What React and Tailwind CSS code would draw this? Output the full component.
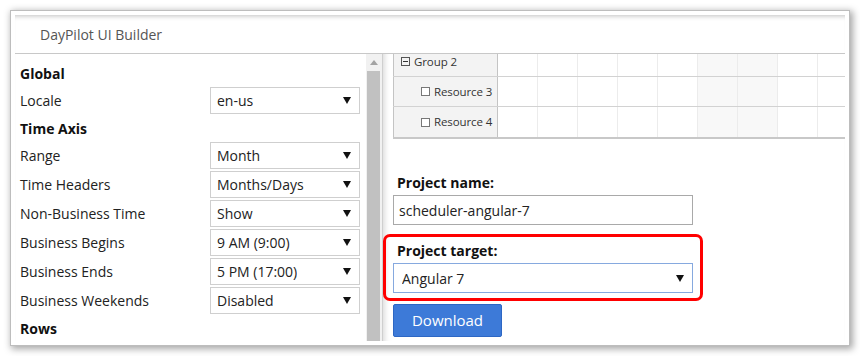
import React from "react";

const font = { fontFamily: '"Open Sans", "Liberation Sans", sans-serif' };

function Arrow() {
  return (
    <svg width="8" height="7" viewBox="0 0 8 7" className="shrink-0">
      <path d="M0 0 H8 L4 7 Z" fill="#111" />
    </svg>
  );
}

function Select({ value, className = "" }) {
  return (
    <div className={`flex items-center justify-between bg-white ${className}`}>
      <span className="truncate">{value}</span>
      <Arrow />
    </div>
  );
}

function Heading({ children }) {
  return <div className="h-[26px] flex items-center font-bold text-[14px] text-[#111]">{children}</div>;
}

function Row({ label, value }) {
  return (
    <div className="h-[29px] flex items-center">
      <div className="w-[190px] text-[14px] text-[#222]">{label}</div>
      <Select
        value={value}
        className="w-[150px] h-[27px] border border-[#cfcfcf] pl-[6px] pr-[8px] text-[14px] text-[#222]"
      />
    </div>
  );
}

const cols = [0, 1, 2, 3, 4, 5, 6, 7, 8];
const weekend = [5, 6];

function GridRow({ children, last }) {
  return (
    <div className={`flex h-[30px] ${last ? "" : "border-b border-[#d2d2d2]"}`}>
      <div className="w-[105px] shrink-0 bg-[#f3f3f3] border-l border-r border-[#c4c4c4] flex items-center text-[11.5px] text-[#333] tracking-[-0.1px]">
        {children}
      </div>
      <div className="flex">
        {cols.map((c) => (
          <div
            key={c}
            className={`w-[40px] shrink-0 border-r border-[#ececec] ${
              weekend.includes(c) ? "bg-[#f8f8f8]" : "bg-white"
            }`}
          />
        ))}
      </div>
    </div>
  );
}

function MinusBox() {
  return (
    <span className="w-[9px] h-[9px] border border-[#555] flex items-center justify-center mr-[4px]">
      <span className="w-[5px] h-px bg-[#333]" />
    </span>
  );
}

function EmptyBox() {
  return <span className="w-[9px] h-[9px] border border-[#777] bg-white mr-[4px]" />;
}

export default function App() {
  return (
    <div className="w-[860px] h-[356px] bg-white p-[10px]" style={font}>
      <div className="w-[840px] h-[336px] bg-white border border-[#bdbdbd] shadow-[2px_2px_7px_1px_rgba(0,0,0,0.35)] p-[4px]">
        <div className="h-full flex flex-col shadow-[inset_0_5px_5px_-4px_rgba(0,0,0,0.25)]">
          {/* header */}
          <div className="h-[39px] shrink-0 border-b border-[#c8c8c8] flex items-center pl-[25px] text-[14px] text-[#555]">
            DayPilot UI Builder
          </div>

          <div className="flex flex-1 min-h-0">
            {/* left settings */}
            <div className="w-[351px] shrink-0 overflow-hidden pl-[5px] pt-[6px]">
              <Heading>Global</Heading>
              <Row label="Locale" value="en-us" />
              <Heading>Time Axis</Heading>
              <Row label="Range" value="Month" />
              <Row label="Time Headers" value="Months/Days" />
              <Row label="Non-Business Time" value="Show" />
              <Row label="Business Begins" value="9 AM (9:00)" />
              <Row label="Business Ends" value="5 PM (17:00)" />
              <Row label="Business Weekends" value="Disabled" />
              <Heading>Rows</Heading>
            </div>

            {/* scrollbar */}
            <div className="w-[16px] shrink-0 bg-[#f1f1f1] flex flex-col items-start pl-px">
              <div className="w-[13px] h-[17px] flex items-center justify-center">
                <svg width="8" height="5" viewBox="0 0 8 5">
                  <path d="M0 5 L4 0 L8 5 Z" fill="#a3a3a3" />
                </svg>
              </div>
              <div className="w-[13px] flex-1 bg-[#c1c1c1]" />
            </div>

            {/* right panel */}
            <div className="flex-1 min-w-0 overflow-hidden border-l border-[#cfcfcf] shadow-[inset_7px_0_6px_-6px_rgba(0,0,0,0.18)] pl-[10px]">
              <div className="-mt-[7px] border-b-2 border-[#c8c8c8]">
                <GridRow>
                  <span className="pl-[7px] flex items-center">
                    <MinusBox />
                    Group 2
                  </span>
                </GridRow>
                <GridRow>
                  <span className="pl-[27px] flex items-center">
                    <EmptyBox />
                    Resource 3
                  </span>
                </GridRow>
                <GridRow last>
                  <span className="pl-[27px] flex items-center">
                    <EmptyBox />
                    Resource 4
                  </span>
                </GridRow>
              </div>

              <div className="mt-[33px] h-[20px] flex items-center pl-[4px] font-bold text-[14px] text-[#111]">
                Project name:
              </div>
              <div className="mt-[3px] w-[300px] h-[30px] border border-[#a9a9a9] flex items-center pl-[5px] text-[14px] text-[#222]">
                scheduler-angular-7
              </div>

              <div className="mt-[9px] -ml-[10px] w-[320px] border-[3px] border-[#ff0000] rounded-[7px] pl-[7px] pt-[3px] pb-[5px]">
                <div className="h-[20px] flex items-center pl-[4px] font-bold text-[14px] text-[#111]">
                  Project target:
                </div>
                <Select
                  value="Angular 7"
                  className="mt-[3px] w-[300px] h-[30px] border border-[#86a9df] pl-[8px] pr-[8px] text-[14px] text-[#222]"
                />
              </div>

              <button
                type="button"
                className="mt-[3px] w-[109px] h-[33px] bg-[#3d7ad8] border border-[#2d67c4] rounded-[2px] text-white text-[15px] flex items-center justify-center"
              >
                Download
              </button>
            </div>
          </div>
        </div>
      </div>
    </div>
  );
}
